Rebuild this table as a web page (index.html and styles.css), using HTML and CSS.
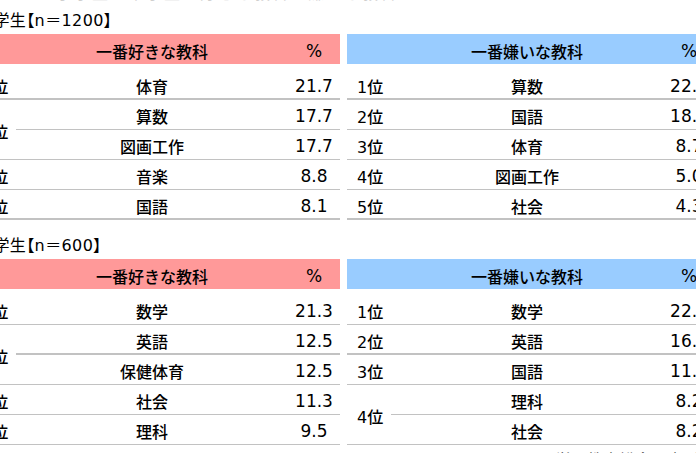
FILE: index.html
```html
<!DOCTYPE html>
<html lang="ja">
<head>
<meta charset="utf-8">
<link rel="stylesheet" href="styles.css">
</head>
<body>
<div class="page">
  <div class="lead"><span>小学生・中学生の好きな教科・嫌いな教科</span></div>

  <section class="section">
    <div class="title">小学生【n＝1200】</div>
    <div class="tables">
      <div class="tbl">
        <div class="head like"><span></span><span>一番好きな教科</span><span class="hp">%</span></div>
        <div class="rows">
          <div class="rk thick">1位</div><div class="sb thick">体育</div><div class="pc thick">21.7</div>
          <div class="rk span2">2位</div><div class="sb">算数</div><div class="pc">17.7</div>
          <div class="sb">図画工作</div><div class="pc">17.7</div>
          <div class="rk">4位</div><div class="sb">音楽</div><div class="pc">8.8</div>
          <div class="rk thick">5位</div><div class="sb thick">国語</div><div class="pc thick">8.1</div>
        </div>
      </div>
      <div class="tbl">
        <div class="head hate"><span></span><span>一番嫌いな教科</span><span class="hp">%</span></div>
        <div class="rows">
          <div class="rk thick">1位</div><div class="sb thick">算数</div><div class="pc thick">22.5</div>
          <div class="rk">2位</div><div class="sb">国語</div><div class="pc">18.2</div>
          <div class="rk">3位</div><div class="sb">体育</div><div class="pc">8.7</div>
          <div class="rk">4位</div><div class="sb">図画工作</div><div class="pc">5.0</div>
          <div class="rk thick">5位</div><div class="sb thick">社会</div><div class="pc thick">4.3</div>
        </div>
      </div>
    </div>
  </section>

  <section class="section second">
    <div class="title">中学生【n＝600】</div>
    <div class="tables">
      <div class="tbl">
        <div class="head like"><span></span><span>一番好きな教科</span><span class="hp">%</span></div>
        <div class="rows">
          <div class="rk">1位</div><div class="sb">数学</div><div class="pc">21.3</div>
          <div class="rk span2">2位</div><div class="sb thick">英語</div><div class="pc thick">12.5</div>
          <div class="sb">保健体育</div><div class="pc">12.5</div>
          <div class="rk">4位</div><div class="sb">社会</div><div class="pc">11.3</div>
          <div class="rk">5位</div><div class="sb">理科</div><div class="pc">9.5</div>
        </div>
      </div>
      <div class="tbl">
        <div class="head hate"><span></span><span>一番嫌いな教科</span><span class="hp">%</span></div>
        <div class="rows">
          <div class="rk">1位</div><div class="sb">数学</div><div class="pc">22.2</div>
          <div class="rk thick">2位</div><div class="sb thick">英語</div><div class="pc thick">16.5</div>
          <div class="rk">3位</div><div class="sb">国語</div><div class="pc">11.0</div>
          <div class="rk span2">4位</div><div class="sb">理科</div><div class="pc">8.2</div>
          <div class="sb">社会</div><div class="pc">8.2</div>
        </div>
      </div>
    </div>
    <div class="credit">© 学研教育総合研究所</div>
  </section>
</div>
</body>
</html>
```

FILE: styles.css
```css
html, body {
  margin: 0;
  padding: 0;
  overflow: hidden;
  background: #ffffff;
}

body {
  font-family: "DejaVu Sans", "Noto Sans CJK JP", sans-serif;
  font-size: 16px;
  color: #000000;
}

.page {
  width: 743px;
  margin-left: -28px;
}

.lead {
  height: 2px;
  overflow: hidden;
  padding-left: 84px;
}

.lead span {
  display: block;
  margin-top: -18px;
  line-height: 20px;
  color: #cfcfcf;
  font-family: "Noto Sans CJK JP", sans-serif;
  font-size: 16px;
  letter-spacing: 2px;
  white-space: nowrap;
}

.title {
  height: 26px;
  line-height: 26px;
  margin-top: 6px;
  padding-left: 5px;
  font-size: 16px;
  letter-spacing: 0.4px;
  font-feature-settings: "palt";
  white-space: nowrap;
}

.second .title {
  margin-top: 13px;
}

.tables {
  display: flex;
  gap: 7px;
}

.tbl {
  width: 368px;
  flex: none;
}

.head {
  display: grid;
  grid-template-columns: 44px 272px 52px;
  height: 30px;
  align-items: center;
  margin-bottom: 6px;
}

.head span {
  text-align: center;
  padding-top: 3px;
  font-family: "Noto Sans CJK JP", sans-serif;
  font-weight: 500;
}

.head .hp {
  font-family: "DejaVu Sans", sans-serif;
  font-size: 17px;
  font-weight: 400;
}

.like { background: #ff9999; }
.hate { background: #99ccff; }

.rows {
  display: grid;
  grid-template-columns: 44px 272px 52px;
  grid-auto-rows: 30px;
}

.rows > div {
  box-sizing: border-box;
  border-bottom: 1px solid #c2c2c2;
  display: flex;
  align-items: center;
  padding-top: 3px;
  white-space: nowrap;
}

.rows > div.thick {
  border-bottom-width: 2px;
}

.rk {
  padding-left: 10px;
  font-weight: 500;
}

.span2 {
  grid-row: span 2;
}

.sb {
  justify-content: center;
  font-family: "Noto Sans CJK JP", sans-serif;
  font-weight: 500;
}

.pc {
  justify-content: center;
  font-size: 17px;
}

.credit {
  text-align: right;
  padding-right: 16px;
  padding-top: 3px;
  line-height: 22px;
  font-family: "Noto Sans CJK JP", sans-serif;
  color: #333333;
  white-space: nowrap;
}
```
